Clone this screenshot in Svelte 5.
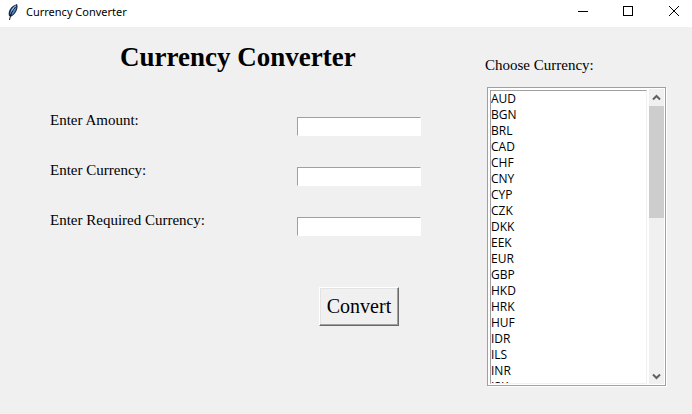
<script>
  const codes = ['AUD', 'BGN', 'BRL', 'CAD', 'CHF', 'CNY', 'CYP', 'CZK', 'DKK', 'EEK', 'EUR', 'GBP', 'HKD', 'HRK', 'HUF', 'IDR', 'ILS', 'INR', 'ISK', 'JPY', 'KRW', 'LTL', 'LVL', 'MTL', 'MXN', 'MYR', 'NOK', 'NZD', 'PHP', 'PLN', 'ROL', 'RON', 'RUB', 'SEK', 'SGD', 'SIT', 'SKK', 'THB', 'TRL', 'TRY', 'USD', 'ZAR'];
  const fields = [
    { id: 'amount', label: 'Enter Amount:' },
    { id: 'currency', label: 'Enter Currency:' },
    { id: 'required', label: 'Enter Required Currency:' }
  ];
  let list;
  let progress = $state(0);

  function scrollList(rows) {
    list.scrollTop += rows * 16;
  }

  function track() {
    progress = list.scrollTop / Math.max(1, list.scrollHeight - list.clientHeight);
  }
</script>

<div class="window">
  <header class="titlebar">
    <svg class="feather" width="12" height="18" viewBox="0 0 12 18" aria-hidden="true">
      <path d="M2 13C0.5 8 4 3 10 1C11.5 4 10 10 4.5 13.5Z" fill="#16263f" />
      <path d="M3 11C3 7 6 4 9 2C10 6 8 9.500 5 12Z" fill="#4c88cc" />
      <path d="M4 8.500C5 5.500 7 3.500 9 2.500L6.500 7.500Z" fill="#a5cdf2" />
      <path d="M8.500 4C5.500 7.500 3.500 11 2.500 17" fill="none" stroke="#0c131f" stroke-width="1" />
    </svg>
    <span class="caption">Currency Converter</span>
    <div class="controls">
      <button aria-label="Minimize"><svg width="10" height="10" shape-rendering="crispEdges"><path d="M0 5.500H10" /></svg></button>
      <button aria-label="Maximize"><svg width="10" height="10" shape-rendering="crispEdges"><path d="M.5.5H9.500V9.500H.5Z" /></svg></button>
      <button aria-label="Close"><svg width="10" height="10"><path d="M0 0L10 10M10 0L0 10" /></svg></button>
    </div>
  </header>

  <main>
    <section class="form">
      <h1>Currency Converter</h1>
      <div class="fields">
        {#each fields as field}
          <div class="field">
            <label for={field.id}>{field.label}</label>
            <input id={field.id} type="text" />
          </div>
        {/each}
      </div>
      <button class="convert">Convert</button>
    </section>

    <section class="chooser">
      <label for="codes">Choose Currency:</label>
      <div class="listframe">
        <select id="codes" multiple bind:this={list} onscroll={track}>
          {#each codes as code}
            <option>{code}</option>
          {/each}
        </select>
        <div class="scrollbar">
          <button aria-label="Scroll up" onclick={() => scrollList(-1)}>
            <svg width="9" height="7"><path d="M1 5.500L4.500 2L8 5.500" /></svg>
          </button>
          <div class="track">
            <div class="spacer" style:flex-grow={progress}></div>
            <div class="thumb"></div>
            <div class="spacer" style:flex-grow={1 - progress}></div>
          </div>
          <button class="down" aria-label="Scroll down" onclick={() => scrollList(1)}>
            <svg width="9" height="7"><path d="M1 1.500L4.500 5L8 1.500" /></svg>
          </button>
        </div>
      </div>
    </section>
  </main>
</div>

<style>
  :global(body) {
    margin: 0;
    background: #f0f0f0;
  }
  .window {
    min-height: 100vh;
    background: #f0f0f0;
    color: #000;
    font-family: "Liberation Serif", "Times New Roman", serif;
    font-size: 15px;
    line-height: 18px;
  }
  button, input, select {
    margin: 0;
    padding: 0;
    border: 0;
    border-radius: 0;
    background: none;
    box-sizing: border-box;
    color: inherit;
  }
  .titlebar {
    display: flex;
    align-items: center;
    height: 27px;
    padding-left: 7px;
    background: #fff;
    box-sizing: border-box;
  }
  .feather {
    margin: 0 7px 4px 0;
  }
  .caption {
    flex: 1;
    padding-bottom: 3px;
    font: 11px/16px "Noto Sans", sans-serif;
  }
  .controls {
    display: flex;
    height: 22px;
    margin-bottom: 5px;
  }
  .controls button {
    display: grid;
    place-items: center;
    width: 45px;
  }
  .controls button:last-child {
    width: 36px;
    margin-left: 6px;
  }
  .controls svg {
    fill: none;
    stroke: #000;
    stroke-width: 1;
  }
  main {
    display: flex;
    justify-content: space-between;
  }
  .form {
    display: flex;
    flex-direction: column;
    width: 371px;
    padding: 14px 0 0 50px;
  }
  h1 {
    margin: 0 0 38px 70px;
    font-size: 27px;
    line-height: 32px;
  }
  .fields {
    display: flex;
    flex-direction: column;
    gap: 25px;
  }
  .field {
    display: flex;
    justify-content: space-between;
    height: 25px;
  }
  .field input {
    align-self: flex-end;
    width: 124px;
    height: 19px;
    border: 1px solid #fff;
    border-top-color: #a0a0a0;
    border-left-color: #a0a0a0;
    background: #fff;
    font: 12px "Open Sans", sans-serif;
  }
  .convert {
    align-self: flex-end;
    width: 80px;
    height: 39px;
    margin: 51px 22px 0 0;
    border: 1px solid #696969;
    border-top-color: #fff;
    border-left-color: #fff;
    box-shadow: inset -1px -1px #a0a0a0, inset 1px 1px #e3e3e3;
    font: 20px "Liberation Serif", serif;
  }
  .chooser {
    width: 181px;
    padding: 29px 26px 0 0;
  }
  .chooser label {
    display: block;
  }
  .listframe {
    display: flex;
    width: 179px;
    height: 299px;
    margin: 13px 0 0 2px;
    padding: 1px;
    border: 1px solid #a0a0a0;
    background: #fff;
    box-shadow: 1px 1px #fff;
    box-sizing: border-box;
  }
  select {
    flex: 1;
    height: 294px;
    margin: 1px 2px 0 1px;
    border: 1px solid #f0f0f0;
    border-top-color: #a0a0a0;
    border-left-color: #a0a0a0;
    background: #fff;
    font: 12px/16px "Open Sans", sans-serif;
    scrollbar-width: none;
    outline: 0;
  }
  option {
    display: flex;
    align-items: flex-end;
    height: 16px;
    min-height: 16px;
    padding: 0;
    box-sizing: border-box;
  }
  .scrollbar {
    display: flex;
    flex-direction: column;
    width: 15px;
    background: #f0f0f0;
  }
  .scrollbar button {
    display: grid;
    place-items: center;
    width: 15px;
    height: 17px;
  }
  .scrollbar .down {
    height: 15px;
  }
  .scrollbar svg {
    fill: none;
    stroke: #606060;
    stroke-width: 2;
  }
  .track {
    display: flex;
    flex: 1;
    flex-direction: column;
  }
  .thumb {
    height: 112px;
    background: #cdcdcd;
  }
  .spacer {
    flex: 0 1 0;
  }
</style>
